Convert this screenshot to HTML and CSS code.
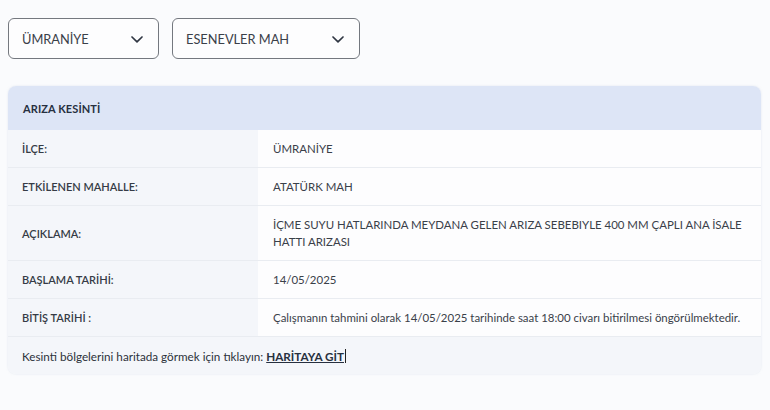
FILE: index.html
```html
<!DOCTYPE html>
<html lang="tr">
<head>
<meta charset="utf-8">
<link rel="stylesheet" href="styles.css">
</head>
<body>
<div class="page">
  <div class="filters">
    <div class="select s1"><span>ÜMRANİYE</span><svg class="chev" width="14" height="9" viewBox="0 0 14 9"><path d="M2 2 L7 6.8 L12 2" fill="none" stroke="#2f3642" stroke-width="1.7" stroke-linecap="round" stroke-linejoin="round"/></svg></div>
    <div class="select s2"><span>ESENEVLER MAH</span><svg class="chev" width="14" height="9" viewBox="0 0 14 9"><path d="M2 2 L7 6.8 L12 2" fill="none" stroke="#2f3642" stroke-width="1.7" stroke-linecap="round" stroke-linejoin="round"/></svg></div>
  </div>
  <div class="card">
    <div class="head">ARIZA KESİNTİ</div>
    <div class="row r1"><div class="lbl">İLÇE:</div><div class="val">ÜMRANİYE</div></div>
    <div class="row r2"><div class="lbl">ETKİLENEN MAHALLE:</div><div class="val">ATATÜRK MAH</div></div>
    <div class="row r3"><div class="lbl">AÇIKLAMA:</div><div class="val">İÇME SUYU HATLARINDA MEYDANA GELEN ARIZA SEBEBIYLE 400 MM ÇAPLI ANA İSALE HATTI ARIZASI</div></div>
    <div class="row r4"><div class="lbl">BAŞLAMA TARİHİ:</div><div class="val">14/05/2025</div></div>
    <div class="row r5"><div class="lbl">BİTİŞ TARİHİ :</div><div class="val">Çalışmanın tahmini olarak 14/05/2025 tarihinde saat 18:00 civarı bitirilmesi öngörülmektedir.</div></div>
    <div class="foot">Kesinti bölgelerini haritada görmek için tıklayın: <a class="link">HARİTAYA GİT</a><span class="caret"></span></div>
  </div>
</div>
</body>
</html>
```
FILE: styles.css
```css
html, body { margin: 0; padding: 0; }
body {
  background: #fafbfd;
  font-family: Lato, "Noto Sans", sans-serif;
  color: #30363f;
  width: 770px;
  height: 410px;
  overflow: hidden;
}
.page { padding: 18px 9px 0 8px; }
.filters { display: flex; gap: 13px; }
.select {
  box-sizing: border-box;
  height: 41px;
  border: 1px solid #74787f;
  border-radius: 6px;
  background: #fdfdfe;
  display: flex;
  align-items: center;
  justify-content: space-between;
  padding: 0 14px 0 13px;
  font-size: 12.8px;
  color: #3a4049;
}
.s1 { width: 151px; }
.s2 { width: 188px; }
.chev { display: block; margin-top: 1px; }
.card {
  margin-top: 27px;
  width: 753px;
  border-radius: 8px;
  overflow: hidden;
  background: #fdfdfe;
  box-shadow: 0 0 2px rgba(200,210,225,0.5);
}
.head {
  height: 44px;
  background: #dde5f6;
  display: flex;
  align-items: center;
  padding-left: 15px;
  font-weight: 700;
  font-size: 11px;
  color: #27303f;
  letter-spacing: 0.1px;
}
.row {
  display: grid;
  grid-template-columns: 250px 1fr;
  border-bottom: 1px solid #e9ecf1;
}
.lbl {
  background: #f4f6fa;
  padding: 0 14px;
  display: flex;
  align-items: center;
  font-size: 11px;
  font-weight: 600;
  color: #353b45;
}
.val {
  padding: 0 14px 0 15px;
  display: flex;
  align-items: center;
  font-size: 11.45px;
  line-height: 17px;
  color: #3a4049;
}
.r1, .r2, .r4, .r5 { height: 37px; }
.r3 { height: 54px; }
.foot {
  height: 37px;
  background: #f4f6fa;
  display: flex;
  align-items: center;
  padding-left: 14px;
  font-size: 11.7px;
  color: #2c323b;
}
.link {
  margin-left: 3px;
  font-weight: 700;
  text-decoration: underline;
  color: #27303f;
}
.caret {
  display: inline-block;
  width: 1px;
  height: 14px;
  background: #222;
  margin-left: 1px;
}
```
